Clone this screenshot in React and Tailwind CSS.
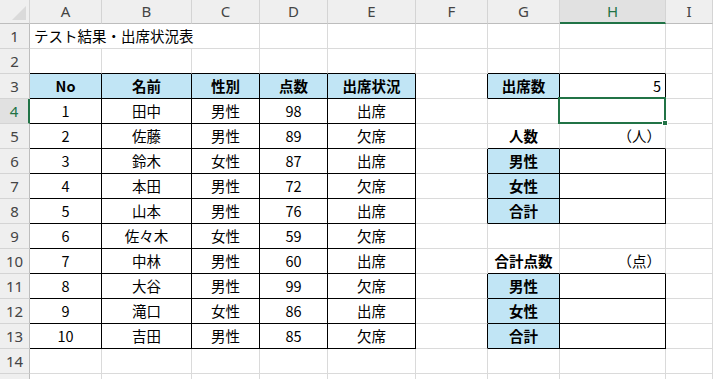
import React from "react";

const letters = ["A", "B", "C", "D", "E", "F", "G", "H", "I"];

const students = [
  ["1", "田中", "男性", "98", "出席"],
  ["2", "佐藤", "男性", "89", "欠席"],
  ["3", "鈴木", "女性", "87", "出席"],
  ["4", "本田", "男性", "72", "欠席"],
  ["5", "山本", "男性", "76", "出席"],
  ["6", "佐々木", "女性", "59", "欠席"],
  ["7", "中林", "男性", "60", "出席"],
  ["8", "大谷", "男性", "99", "欠席"],
  ["9", "滝口", "女性", "86", "出席"],
  ["10", "吉田", "男性", "85", "欠席"],
];

// bordered ranges: [rowFrom, rowTo, colFrom, colTo]
const boxes = [
  [3, 13, 1, 5],
  [3, 3, 7, 8],
  [6, 8, 7, 8],
  [11, 13, 7, 8],
];

const inBox = (r, c) =>
  boxes.some(([r1, r2, c1, c2]) => r >= r1 && r <= r2 && c >= c1 && c <= c2);

// cell contents keyed "row-col"
const cells = {};
const put = (r, c, t, opts = {}) => {
  cells[`${r}-${c}`] = { t, ...opts };
};

["No", "名前", "性別", "点数", "出席状況"].forEach((t, i) =>
  put(3, i + 1, t, { bold: true, fill: true })
);
students.forEach((s, i) => s.forEach((t, j) => put(i + 4, j + 1, t)));

put(3, 7, "出席数", { bold: true, fill: true });
put(3, 8, "5", { align: "right" });
put(5, 7, "人数", { bold: true });
put(5, 8, "（人）", { align: "right" });
put(6, 7, "男性", { bold: true, fill: true });
put(7, 7, "女性", { bold: true, fill: true });
put(8, 7, "合計", { bold: true, fill: true });
put(10, 7, "合計点数", { bold: true });
put(10, 8, "（点）", { align: "right" });
put(11, 7, "男性", { bold: true, fill: true });
put(12, 7, "女性", { bold: true, fill: true });
put(13, 7, "合計", { bold: true, fill: true });

function Cell({ r, c }) {
  const data = cells[`${r}-${c}`];
  const right = inBox(r, c) || inBox(r, c + 1);
  const bottom = inBox(r, c) || inBox(r + 1, c);
  const selected = r === 4 && c === 8;

  return (
    <div
      className={`relative h-[25px] flex items-center border-r border-b ${
        right ? "border-r-black" : "border-r-[#dadada]"
      } ${bottom ? "border-b-black" : "border-b-[#dadada]"} ${
        data && data.fill ? "bg-[#c1e5f5]" : "bg-white"
      } ${
        data && data.align === "right"
          ? "justify-end pr-[4px]"
          : "justify-center"
      }`}
    >
      {data && (
        <span
          className={`text-[14.5px] leading-none text-black whitespace-nowrap ${
            data.bold ? "font-bold" : "font-normal"
          }`}
        >
          {data.t}
        </span>
      )}
      {selected && (
        <div className="absolute -left-[2px] -top-[2px] w-[108px] h-[27px] border-2 border-[#217346] z-10">
          <div className="absolute -right-[4px] -bottom-[4px] w-[6px] h-[6px] bg-[#217346] border border-white" />
        </div>
      )}
    </div>
  );
}

export default function App() {
  const rows = Array.from({ length: 15 }, (_, i) => i + 1);

  return (
    <div className="w-[713px] h-[379px] overflow-hidden bg-white font-['Noto_Sans_CJK_JP'] select-none">
      <div className="grid grid-cols-[30px_72px_90px_68px_68px_88px_72px_72px_106px_1fr]">
        {/* column headers */}
        <div className="h-[24px] bg-[#efefef] border-r border-b border-r-[#d4d4d4] border-b-[#bdbdbd] flex items-end justify-end">
          <svg width="14" height="14" viewBox="0 0 14 14" className="mr-[3px] mb-[3px]">
            <polygon points="14,0 14,14 0,14" fill="#dadada" />
          </svg>
        </div>
        {letters.map((l) =>
          l === "H" ? (
            <div
              key={l}
              className="h-[24px] bg-[#e1e1e1] border-r border-r-[#d4d4d4] border-b-2 border-b-[#217346] flex items-center justify-center text-[15px] text-[#217346] font-['Noto_Sans']"
            >
              {l}
            </div>
          ) : (
            <div
              key={l}
              className="h-[24px] bg-[#efefef] border-r border-b border-r-[#d4d4d4] border-b-[#bdbdbd] flex items-center justify-center text-[15px] text-[#444] font-['Noto_Sans']"
            >
              {l}
            </div>
          )
        )}

        {rows.map((r) => (
          <React.Fragment key={r}>
            {r === 4 ? (
              <div className="h-[25px] bg-[#e1e1e1] border-r-2 border-b border-r-[#217346] border-b-[#d4d4d4] flex items-center justify-center text-[15px] text-[#217346] font-['Noto_Sans']">
                {r}
              </div>
            ) : (
              <div className="h-[25px] bg-[#efefef] border-r border-b border-r-[#bdbdbd] border-b-[#d4d4d4] flex items-center justify-center text-[15px] text-[#444] font-['Noto_Sans']">
                {r < 15 ? r : ""}
              </div>
            )}
            {r === 1 ? (
              <>
                <div className="col-span-3 h-[25px] flex items-center pl-[4px] border-r border-b border-r-[#dadada] border-b-[#dadada] overflow-visible">
                  <span className="text-[14.5px] leading-none text-black whitespace-nowrap">
                    テスト結果・出席状況表
                  </span>
                </div>
                {[4, 5, 6, 7, 8, 9].map((c) => (
                  <Cell key={c} r={r} c={c} />
                ))}
              </>
            ) : (
              [1, 2, 3, 4, 5, 6, 7, 8, 9].map((c) => (
                <Cell key={c} r={r} c={c} />
              ))
            )}
          </React.Fragment>
        ))}
      </div>
    </div>
  );
}
